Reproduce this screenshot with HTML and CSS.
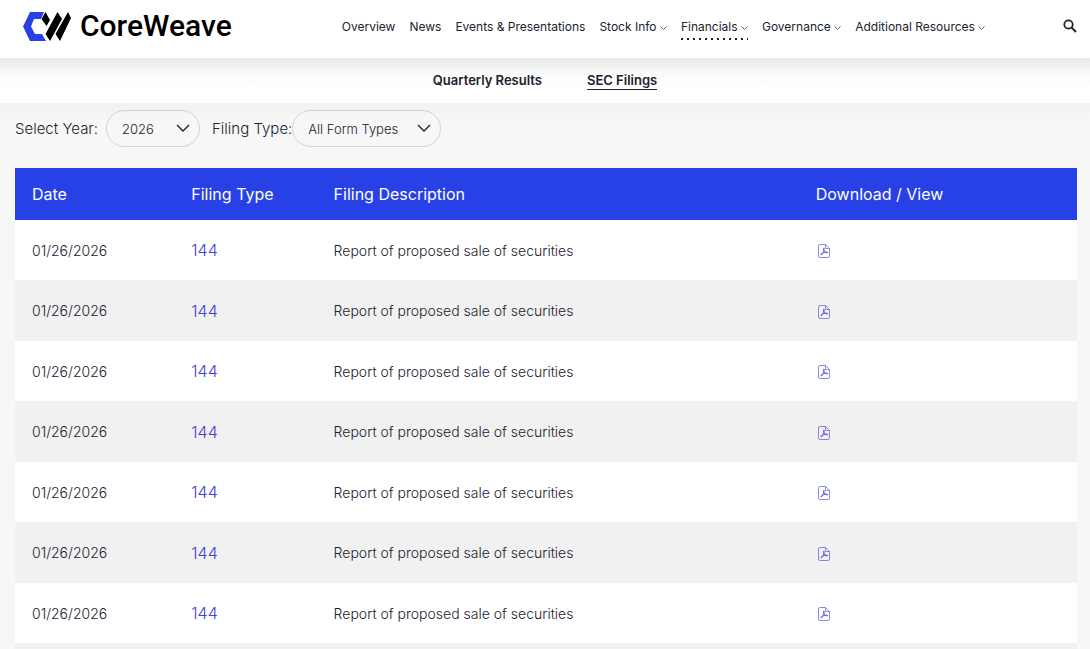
FILE: index.html
```
<!DOCTYPE html>
<html lang="en">
<head>
    <meta charset="UTF-8">
    <meta name="viewport" content="width=device-width, initial-scale=1.0">
    <title>CoreWeave - SEC Filings</title>
    <link rel="stylesheet" href="styles.css">
</head>
<body>
<svg class="sprite" aria-hidden="true">
    <symbol id="chevron" viewBox="0 0 14 8">
        <path d="M1 1l6 6 6-6" fill="none" stroke="currentColor" stroke-width="1.4"/>
    </symbol>
    <symbol id="pdf" viewBox="0 0 12 14">
        <path d="M2 .5h5.5l4 4V12a1.500 1.500 0 0 1-1.500 1.500H2A1.500 1.500 0 0 1 .5 12V2A1.500 1.500 0 0 1 2 .5zM7.500.5v4h4" fill="none" stroke="currentColor" stroke-width=".6"/>
        <path d="M5.700 4.200c-.6 1.600.8 4.500 3.600 4.800.9 0 .5-1-.6-.9-2 0-4.200.8-5.600 2-.8.900.1 1.100.7.400C5 9 6.200 6.300 6.200 4.600c0-.4-.3-.6-.5-.4z" fill="none" stroke="currentColor" stroke-width=".8"/>
    </symbol>
</svg>

<header class="header">
    <a class="logo" href="#">
        <svg class="logo-mark" viewBox="0 0 48 29" aria-hidden="true">
            <path d="M7 0h14l-3 7h-7L8 14.500 12 22h7l4 7H7L0 14.500z" fill="#2741e7"/>
            <path d="M22.500 0L27 8l-3.500 6-5-7zM34.500 0L39 7 27 29l-4.500-7zM45 0L48 6 37 29l-4.500-7z"/>
        </svg>
        <span>CoreWeave</span>
    </a>
    <nav class="nav">
        <a href="#">Overview</a>
        <a href="#">News</a>
        <a href="#">Events &amp; Presentations</a>
        <a href="#">Stock Info <svg><use href="#chevron"/></svg></a>
        <a class="active" href="#">Financials <svg><use href="#chevron"/></svg></a>
        <a href="#">Governance <svg><use href="#chevron"/></svg></a>
        <a href="#">Additional Resources <svg><use href="#chevron"/></svg></a>
    </nav>
    <button class="search" type="button" aria-label="Search">
        <svg viewBox="0 0 14 14">
            <circle cx="5.500" cy="5.500" r="4.200" fill="none" stroke="currentColor" stroke-width="1.800"/>
            <path d="M8.500 8.500l4.500 4.500" stroke="currentColor" stroke-width="2"/>
        </svg>
    </button>
</header>

<nav class="subnav">
    <a href="#">Quarterly Results</a>
    <a class="current" href="#">SEC Filings</a>
</nav>

<main class="content">
    <form class="filters">
        <label for="year">Select Year:</label>
        <div class="select select-year">
            <select id="year">
                <option>2026</option>
                <option>2025</option>
            </select>
            <svg><use href="#chevron"/></svg>
        </div>
        <label for="type">Filing Type:</label>
        <div class="select select-type">
            <select id="type">
                <option>All Form Types</option>
            </select>
            <svg><use href="#chevron"/></svg>
        </div>
    </form>

    <table class="filings">
        <thead>
            <tr>
                <th class="col-date">Date</th>
                <th class="col-type">Filing Type</th>
                <th class="col-desc">Filing Description</th>
                <th>Download / View</th>
            </tr>
        </thead>
        <tbody>
            <tr>
                <td>01/26/2026</td>
                <td><a class="form-type" href="#">144</a></td>
                <td>Report of proposed sale of securities</td>
                <td><a class="pdf" href="#" aria-label="PDF"><svg><use href="#pdf"/></svg></a></td>
            </tr>
            <tr>
                <td>01/26/2026</td>
                <td><a class="form-type" href="#">144</a></td>
                <td>Report of proposed sale of securities</td>
                <td><a class="pdf" href="#" aria-label="PDF"><svg><use href="#pdf"/></svg></a></td>
            </tr>
            <tr>
                <td>01/26/2026</td>
                <td><a class="form-type" href="#">144</a></td>
                <td>Report of proposed sale of securities</td>
                <td><a class="pdf" href="#" aria-label="PDF"><svg><use href="#pdf"/></svg></a></td>
            </tr>
            <tr>
                <td>01/26/2026</td>
                <td><a class="form-type" href="#">144</a></td>
                <td>Report of proposed sale of securities</td>
                <td><a class="pdf" href="#" aria-label="PDF"><svg><use href="#pdf"/></svg></a></td>
            </tr>
            <tr>
                <td>01/26/2026</td>
                <td><a class="form-type" href="#">144</a></td>
                <td>Report of proposed sale of securities</td>
                <td><a class="pdf" href="#" aria-label="PDF"><svg><use href="#pdf"/></svg></a></td>
            </tr>
            <tr>
                <td>01/26/2026</td>
                <td><a class="form-type" href="#">144</a></td>
                <td>Report of proposed sale of securities</td>
                <td><a class="pdf" href="#" aria-label="PDF"><svg><use href="#pdf"/></svg></a></td>
            </tr>
            <tr>
                <td>01/26/2026</td>
                <td><a class="form-type" href="#">144</a></td>
                <td>Report of proposed sale of securities</td>
                <td><a class="pdf" href="#" aria-label="PDF"><svg><use href="#pdf"/></svg></a></td>
            </tr>
            <tr>
                <td>01/26/2026</td>
                <td><a class="form-type" href="#">144</a></td>
                <td>Report of proposed sale of securities</td>
                <td><a class="pdf" href="#" aria-label="PDF"><svg><use href="#pdf"/></svg></a></td>
            </tr>
        </tbody>
    </table>
</main>
</body>
</html>
```
FILE: styles.css
```
* {
    box-sizing: border-box;
}
body {
    margin: 0;
    background-color: #f7f7f7;
    color: #20222e;
    font-family: Inter, "Open Sans", sans-serif;
    font-size: 14px;
}
a {
    color: inherit;
    text-decoration: none;
}
.sprite {
    display: none;
}
.header {
    display: flex;
    align-items: center;
    height: 58px;
    padding: 0 13px 6px 23px;
    background-color: #fff;
}
.logo {
    display: flex;
    align-items: center;
    gap: 9px;
    color: #000;
    font-family: Roboto, sans-serif;
    font-size: 30px;
    font-weight: 500;
    line-height: 30px;
}
.logo-mark {
    width: 48px;
    height: 29px;
}
.nav {
    display: flex;
    gap: 14px;
    margin-left: 110px;
    padding-top: 2px;
    font-size: 12px;
    line-height: 26px;
    white-space: nowrap;
}
.nav svg {
    width: 7px;
    height: 4px;
    vertical-align: middle;
}
.nav .active {
    background: linear-gradient(90deg, #20222e 2px, transparent 2px) left bottom / 6px 2px repeat-x;
}
.search {
    margin-left: auto;
    padding: 0;
    border: none;
    background: none;
    color: #20222e;
    cursor: pointer;
}
.search svg {
    display: block;
    width: 14px;
    height: 14px;
}
.subnav {
    display: flex;
    justify-content: center;
    gap: 45px;
    height: 45px;
    padding-top: 14px;
    background: linear-gradient(#e7e9e9, #fafafa 16px, #fff 30px);
    font-size: 13px;
    font-weight: 600;
    line-height: 17px;
}
.subnav .current {
    height: 18px;
    border-bottom: 1px solid #20222e;
}
.content {
    padding: 7px 13px 0 15px;
    background: linear-gradient(#f1f1f1, #f7f7f7 16px);
}
.filters {
    display: flex;
    align-items: center;
    margin-bottom: 21px;
}
.filters label {
    font-size: 15px;
    font-weight: 300;
}
.select {
    position: relative;
}
.select-year {
    width: 94px;
    margin: 0 12px 0 8px;
}
.select-type {
    width: 149px;
}
.select select {
    appearance: none;
    display: block;
    width: 100%;
    height: 37px;
    padding: 0 15px;
    border: 1px solid #cdd3da;
    border-radius: 19px;
    background: transparent;
    color: inherit;
    font-family: inherit;
    font-size: 13px;
    font-weight: 300;
}
.select svg {
    position: absolute;
    top: 14px;
    right: 10px;
    width: 14px;
    height: 8px;
    pointer-events: none;
}
.filings {
    width: 100%;
    border-collapse: collapse;
    table-layout: fixed;
    background-color: #fff;
}
.filings th {
    height: 52px;
    padding: 0 17px;
    background-color: #2741e7;
    color: #fff;
    font-size: 16px;
    font-weight: 400;
    text-align: left;
}
.filings td {
    height: 60px;
    padding: 0 17px;
    font-weight: 300;
}
.filings tbody tr:nth-child(even) td {
    height: 61px;
    background-color: #f1f1f1;
}
.col-date {
    width: 15%;
}
.col-type {
    width: 13.4%;
}
.col-desc {
    width: 45.4%;
}
.form-type {
    color: #4540d4;
    font-size: 16px;
}
.pdf {
    display: block;
    padding: 2px 0 0 2px;
    color: #4540d4;
}
.pdf svg {
    display: block;
    width: 12px;
    height: 14px;
}
```
